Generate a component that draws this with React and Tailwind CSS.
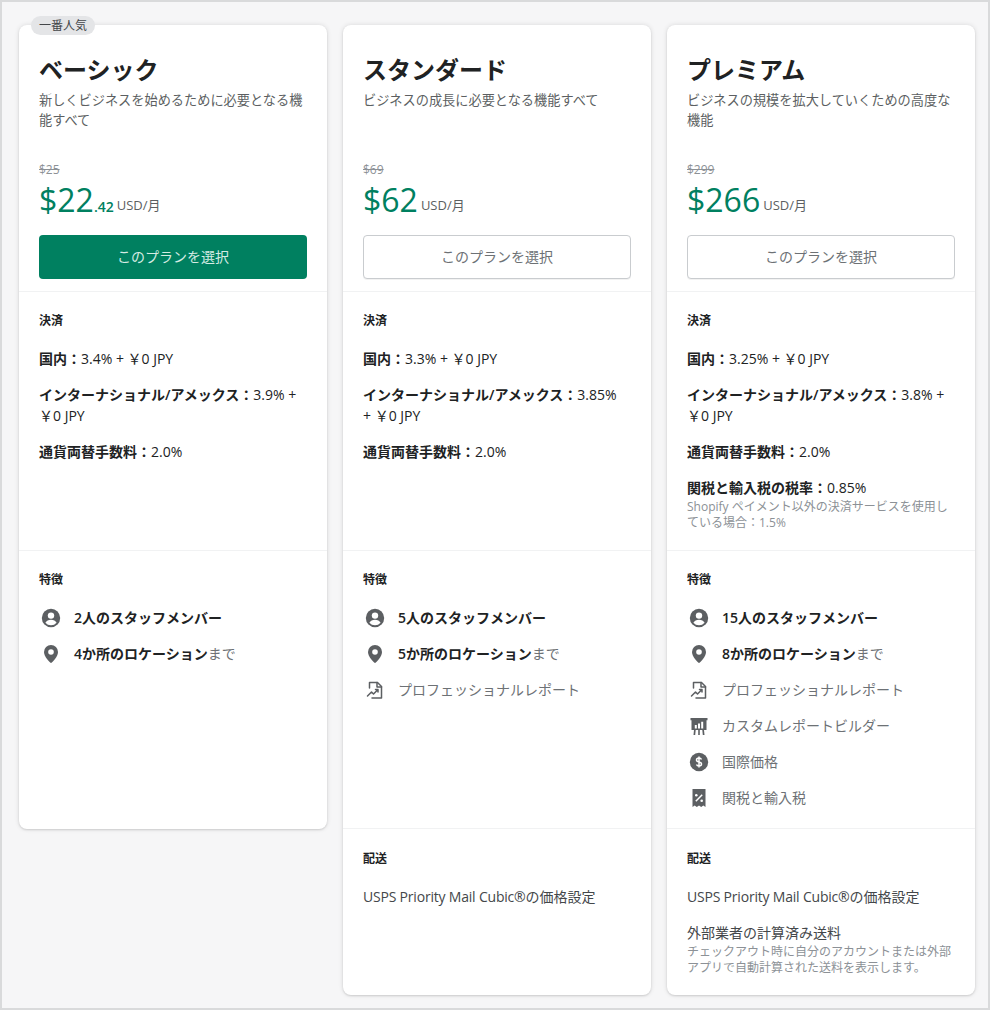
import React from 'react';

const PersonIcon = () => (
  <svg className="w-5 h-5" viewBox="0 0 20 20" fill="#5c5f62">
    <circle cx="10" cy="10" r="9.2" />
    <circle cx="10" cy="7.6" r="3.2" fill="#fff" />
    <path d="M4.4 14.8c1-2.200 3.100-3.100 5.600-3.100s4.600.9 5.600 3.100a7.400 7.400 0 01-11.200 0z" fill="#fff" />
  </svg>
);

const PinIcon = () => (
  <svg className="w-5 h-5" viewBox="0 0 20 20" fill="#5c5f62">
    <path d="M10 1a7 7 0 00-7 7c0 4.400 5.200 10 7 11 1.800-1 7-6.600 7-11a7 7 0 00-7-7z" />
    <circle cx="10" cy="8" r="2.800" fill="#fff" />
  </svg>
);

const ReportIcon = () => (
  <svg className="w-5 h-5" viewBox="0 0 20 20" fill="none" stroke="#5c5f62" strokeWidth="1.500" strokeLinejoin="round" strokeLinecap="round">
    <path d="M4.500 8V2.500h8l4 4V18H7" />
    <path d="M12 2.500V7h4.500" />
    <path d="M2.500 16l4-4 2 2 4.500-4.500M10.500 9.500H13V12" />
  </svg>
);

const BuilderIcon = () => (
  <svg className="w-5 h-5" viewBox="0 0 20 20" fill="#5c5f62">
    <path d="M1.500 2h17v2.200h-1V14h-15V4.200h-1z" />
    <path d="M5.800 9h2v3.500h-2zM9 7.500h2v5H9zM12.200 5.800h2v6.700h-2z" fill="#fff" />
    <path d="M5 14h1.700l-.5 5H4.500zM9.200 14h1.600v5H9.200zM13.300 14H15l.5 5h-1.700z" />
  </svg>
);

const DollarIcon = () => (
  <svg className="w-5 h-5" viewBox="0 0 20 20">
    <circle cx="10" cy="10" r="9.200" fill="#5c5f62" />
    <path d="M12.500 7.500c-.4-1-1.300-1.500-2.500-1.500-1.500 0-2.500.8-2.500 2s1 1.700 2.500 2 2.500.8 2.500 2-1 2-2.500 2c-1.200 0-2.100-.5-2.500-1.500M10 4.500v11" fill="none" stroke="#fff" strokeWidth="1.500" />
  </svg>
);

const ReceiptIcon = () => (
  <svg className="w-5 h-5" viewBox="0 0 20 20" fill="#5c5f62">
    <path d="M3.500 1h13v18l-2.200-1.400-2.100 1.400-2.200-1.400L7.800 19l-2.100-1.400L3.500 19z" />
    <path d="M6.800 13.200l6.400-6.400" stroke="#fff" strokeWidth="1.500" />
    <circle cx="7.300" cy="7.300" r="1.300" fill="#fff" />
    <circle cx="12.700" cy="12.700" r="1.300" fill="#fff" />
  </svg>
);

const uspsTitle = (
  <>
    <span className="tracking-[-0.2px]">USPS Priority Mail Cubic®</span>の価格設定
  </>
);

const plans = [
  {
    name: 'ベーシック',
    desc: '新しくビジネスを始めるために必要となる機能すべて',
    oldPrice: '$25',
    price: '$22',
    cents: '.42',
    primary: true,
    payments: [
      { label: '国内：', value: '3.4% + ￥0 JPY' },
      { label: 'インターナショナル/アメックス：', value: '3.9% + ￥0 JPY' },
      { label: '通貨両替手数料：', value: '2.0%' },
    ],
    features: [
      { icon: <PersonIcon />, bold: '2人のスタッフメンバー' },
      { icon: <PinIcon />, bold: '4か所のロケーション', text: 'まで' },
    ],
  },
  {
    name: 'スタンダード',
    desc: 'ビジネスの成長に必要となる機能すべて',
    oldPrice: '$69',
    price: '$62',
    payments: [
      { label: '国内：', value: '3.3% + ￥0 JPY' },
      { label: 'インターナショナル/アメックス：', value: '3.85%\n+ ￥0 JPY' },
      { label: '通貨両替手数料：', value: '2.0%' },
    ],
    features: [
      { icon: <PersonIcon />, bold: '5人のスタッフメンバー' },
      { icon: <PinIcon />, bold: '5か所のロケーション', text: 'まで' },
      { icon: <ReportIcon />, text: 'プロフェッショナルレポート' },
    ],
    shipping: [{ title: uspsTitle }],
  },
  {
    name: 'プレミアム',
    desc: 'ビジネスの規模を拡大していくための高度な機能',
    oldPrice: '$299',
    price: '$266',
    payments: [
      { label: '国内：', value: '3.25% + ￥0 JPY' },
      { label: 'インターナショナル/アメックス：', value: '3.8% + ￥0 JPY' },
      { label: '通貨両替手数料：', value: '2.0%' },
      { label: '関税と輸入税の税率：', value: '0.85%', note: 'Shopify ペイメント以外の決済サービスを使用している場合：1.5%' },
    ],
    features: [
      { icon: <PersonIcon />, bold: '15人のスタッフメンバー' },
      { icon: <PinIcon />, bold: '8か所のロケーション', text: 'まで' },
      { icon: <ReportIcon />, text: 'プロフェッショナルレポート' },
      { icon: <BuilderIcon />, text: 'カスタムレポートビルダー' },
      { icon: <DollarIcon />, text: '国際価格' },
      { icon: <ReceiptIcon />, text: '関税と輸入税' },
    ],
    shipping: [
      { title: uspsTitle },
      { title: '外部業者の計算済み送料', note: 'チェックアウト時に自分のアカウントまたは外部アプリで自動計算された送料を表示します。' },
    ],
  },
];

const PlanCard = ({ plan }) => (
  <div className="relative bg-white rounded-lg shadow-[0_0_5px_rgba(23,24,24,0.12),0_1px_2px_rgba(0,0,0,0.12)]">
    {plan.primary && (
      <span className="absolute -top-[9px] left-3 h-[19px] px-2 rounded-full bg-[#e4e5e7] text-xs leading-[19px] text-[#44474a]">一番人気</span>
    )}
    <div className="px-5 pt-[31px] pb-3 border-b border-[#f1f2f3]">
      <h2 className="text-2xl leading-7 font-bold text-[#202223]">{plan.name}</h2>
      <p className="mt-[6px] h-10 text-[13.2px] leading-5 text-[#5c5f62]">{plan.desc}</p>
      <div className="mt-[32px] text-xs leading-4 text-[#8c9196] line-through">{plan.oldPrice}</div>
      <div className="mt-[2px] flex items-baseline h-10 leading-10">
        <span className="text-[32px] text-[#008060]">{plan.price}</span>
        {plan.cents && <span className="text-sm font-semibold text-[#008060]">{plan.cents}</span>}
        <span className="ml-[3px] -translate-y-0.5 text-[13px] text-[#5c5f62]">USD/月</span>
      </div>
      <button
        className={`mt-[15px] w-full h-11 rounded text-sm ${
          plan.primary
            ? 'bg-[#008060] text-[#d5ebe3]'
            : 'bg-white text-[#6d7175] border border-[#c9cccf] shadow-[0_1px_0_rgba(0,0,0,0.05)]'
        }`}
      >
        このプランを選択
      </button>
    </div>

    <div className="h-[259px] px-5 pt-[21px] border-b border-[#f1f2f3]">
      <h3 className="text-xs leading-4 font-semibold text-[#202223] mb-[19px]">決済</h3>
      <div className="flex flex-col gap-[15px]">
        {plan.payments.map((item, index) => (
          <div key={index} className="text-sm leading-[21px] text-[#202223] [text-spacing-trim:space-all]">
            <p className="whitespace-pre-line"><span className="font-semibold">{item.label}</span>{item.value}</p>
            {item.note && <p className="mt-px text-xs leading-4 text-[#8c9196]">{item.note}</p>}
          </div>
        ))}
      </div>
    </div>

    <div className={`h-[278px] px-5 pt-[21px] ${plan.shipping ? 'border-b border-[#f1f2f3]' : ''}`}>
      <h3 className="text-xs leading-4 font-semibold text-[#202223] mb-[17px]">特徴</h3>
      <ul className="flex flex-col gap-[11px]">
        {plan.features.map((feature, index) => (
          <li key={index} className="flex items-center gap-[11px] h-[25px] text-sm text-[#6d7175]">
            <span className="w-6 flex justify-center">{feature.icon}</span>
            <span>
              {feature.bold && <span className="font-semibold text-[#202223]">{feature.bold}</span>}
              {feature.text}
            </span>
          </li>
        ))}
      </ul>
    </div>

    {plan.shipping && (
      <div className="h-[166px] px-5 pt-[22px]">
        <h3 className="text-xs leading-4 font-semibold text-[#202223] mb-[19px]">配送</h3>
        <div className="flex flex-col gap-[15px]">
          {plan.shipping.map((item, index) => (
            <div key={index}>
              <p className="text-sm leading-[21px] text-[#44474a]">{item.title}</p>
              {item.note && <p className="mt-px text-xs leading-4 text-[#8c9196]">{item.note}</p>}
            </div>
          ))}
        </div>
      </div>
    )}
  </div>
);

export default function App() {
  return (
    <div
      className="min-h-[1010px] bg-[#f6f6f7] border-2 border-[#d9dadb] pt-[23px] pl-[17px] grid grid-cols-[308px_308px_308px] gap-4 items-start"
      style={{ fontFamily: '"Open Sans", "Noto Sans CJK JP", sans-serif' }}
    >
      {plans.map((plan) => (
        <PlanCard key={plan.name} plan={plan} />
      ))}
    </div>
  );
}
